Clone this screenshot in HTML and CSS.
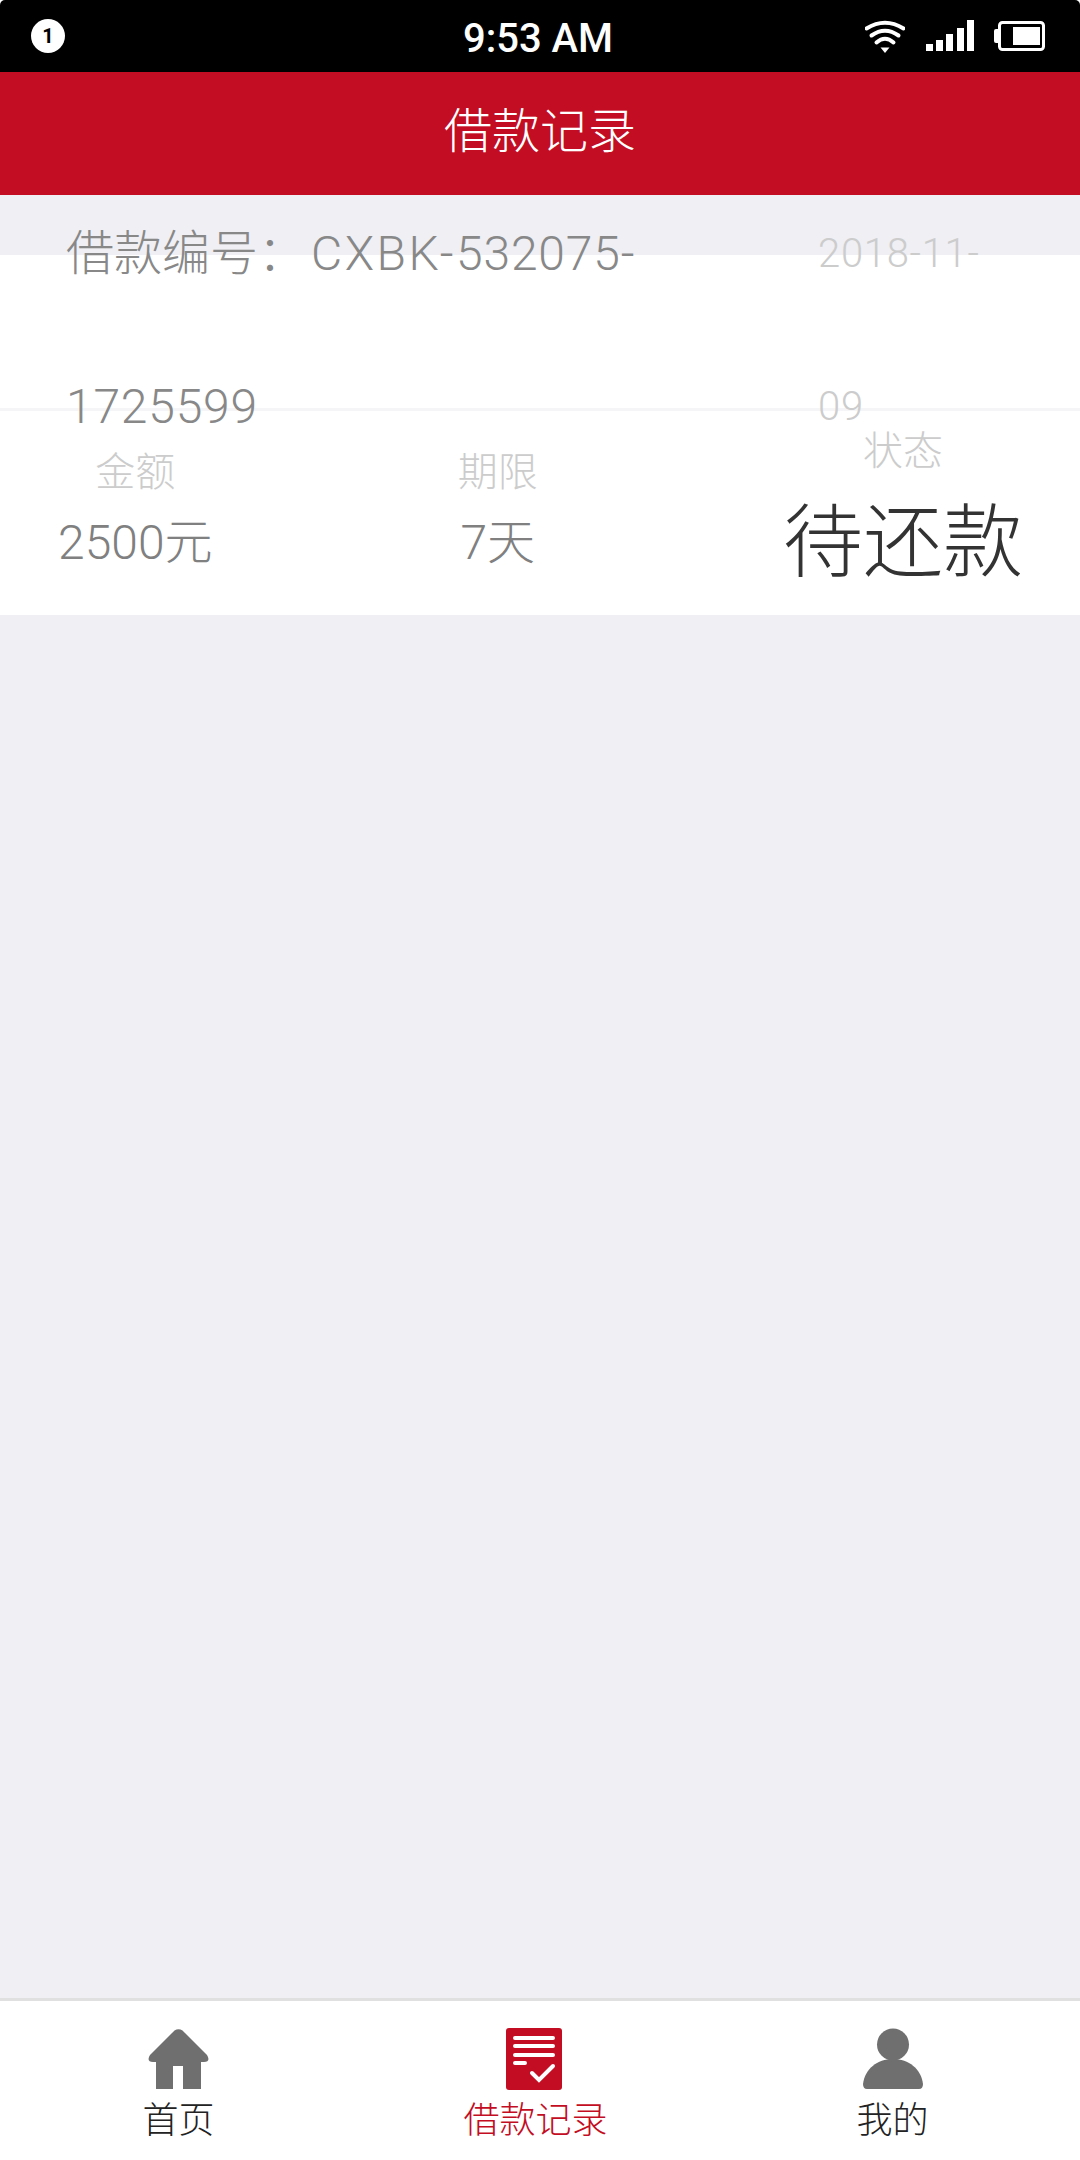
FILE: index.html
```html
<!DOCTYPE html>
<html lang="zh-CN">
<head>
  <meta charset="UTF-8">
  <meta name="viewport" content="width=device-width, initial-scale=1.0">
  <title>借款记录</title>
  <link rel="stylesheet" href="styles.css">
</head>
<body>
  <div class="app">
    <div class="status-bar">
      <div class="status-left"><span class="badge">1</span></div>
      <div class="status-time">9:53 AM</div>
      <div class="status-right">
        <svg class="icon-wifi" width="40" height="33" viewBox="0 0 40 33">
          <path d="M1.5 8.5Q20 -3 38.5 8.5" fill="none" stroke="#fff" stroke-width="4" stroke-linecap="round"/>
          <path d="M6.5 15.5Q20 6 33.5 15.5" fill="none" stroke="#fff" stroke-width="4" stroke-linecap="round"/>
          <path d="M11.5 22.5Q20 15 28.5 22.5" fill="none" stroke="#fff" stroke-width="4" stroke-linecap="round"/>
          <path d="M15.5 27.5H24.5L20 33Z" fill="#fff"/>
        </svg>
        <svg class="icon-signal" width="48" height="31" viewBox="0 0 48 31">
          <rect x="0" y="24" width="7" height="7" fill="#fff"/>
          <rect x="10" y="20" width="7" height="11" fill="#fff"/>
          <rect x="20" y="14" width="7" height="17" fill="#fff"/>
          <rect x="31" y="8" width="7" height="23" fill="#fff"/>
          <rect x="41" y="0" width="7" height="31" fill="#fff"/>
        </svg>
        <svg class="icon-battery" width="51" height="30" viewBox="0 0 51 30">
          <path d="M4 8H2Q0 8 0 10V20Q0 22 2 22H4Z" fill="#fff"/>
          <rect x="5.5" y="1.5" width="44" height="27" rx="3" fill="none" stroke="#fff" stroke-width="3"/>
          <rect x="19" y="6" width="27" height="18" fill="#fff"/>
        </svg>
      </div>
    </div>

    <div class="title-bar">借款记录</div>

    <div class="content">
      <div class="loan-card">
        <div class="loan-head">
          <div class="loan-no">借款编号：<span class="loan-code"><span class="code-prefix">CXBK-</span>532075-<br>1725599</span></div>
          <div class="loan-date">2018-11-<br>09</div>
        </div>
        <div class="loan-body">
          <div class="loan-col">
            <div class="col-label">金额</div>
            <div class="col-value">2500元</div>
          </div>
          <div class="loan-col">
            <div class="col-label">期限</div>
            <div class="col-value">7天</div>
          </div>
          <div class="loan-col">
            <div class="col-label">状态</div>
            <div class="col-value col-status">待还款</div>
          </div>
        </div>
      </div>
    </div>

    <div class="tab-bar">
      <div class="tab">
        <svg class="tab-icon" width="61" height="60" viewBox="0 0 61 60">
          <path d="M26.5 1.5Q30.5 -1 34.5 1.5L59 26Q63 32.500 56 33H53V60H35V37H25V60H8V33H5Q-2 32.500 2 26Z" fill="#6f6f6f"/>
        </svg>
        <div class="tab-label">首页</div>
      </div>
      <div class="tab tab-active">
        <svg class="tab-icon tab-icon-record" width="56" height="62" viewBox="0 0 56 62">
          <rect width="56" height="62" rx="3" fill="#c30d23"/>
          <path d="M9 10H47M9 18H47M9 27H47M9 35H19" stroke="#fff" stroke-width="4" stroke-linecap="round"/>
          <path d="M26 45L33 52L47 38" fill="none" stroke="#fff" stroke-width="4" stroke-linecap="round"/>
        </svg>
        <div class="tab-label">借款记录</div>
      </div>
      <div class="tab">
        <svg class="tab-icon" width="60" height="60" viewBox="0 0 60 60">
          <circle cx="30" cy="15.500" r="16" fill="#6f6f6f"/>
          <path d="M0 55C2 40 14 30 30 30C46 30 58 40 60 55Q60 60 56 60H4Q0 60 0 55Z" fill="#6f6f6f"/>
        </svg>
        <div class="tab-label">我的</div>
      </div>
    </div>
  </div>
</body>
</html>
```

FILE: styles.css
```css
/* CSS Styles */
body {
  margin: 0;
  padding: 0;
  font-family: Roboto, "Noto Sans CJK SC", sans-serif;
  font-weight: 300;
  background-color: #fff;
}

.app {
  display: flex;
  flex-direction: column;
  height: 2160px;
}

.status-bar {
  display: grid;
  grid-template-columns: 1fr auto 1fr;
  align-items: center;
  height: 72px;
  padding: 0 35px 0 31px;
  border-radius: 5px 5px 0 0;
  background-color: #000;
  color: #fff;
}

.badge {
  display: flex;
  align-items: center;
  justify-content: center;
  width: 34px;
  height: 34px;
  border-radius: 50%;
  background-color: #fff;
  color: #000;
  font-size: 20px;
  font-weight: 700;
}

.status-time {
  margin-top: 4px;
  font-size: 40px;
  font-weight: 500;
}

.status-right {
  display: flex;
  align-items: center;
  justify-content: flex-end;
}

.icon-wifi {
  margin-right: 21px;
}

.icon-signal {
  margin-top: -2px;
  margin-right: 20px;
}

.title-bar {
  height: 123px;
  line-height: 120px;
  text-align: center;
  font-size: 48px;
  color: #fff;
  background-color: #c30d23;
}

.content {
  flex: 1;
  padding-top: 60px;
  background-color: #efeff4;
}

.loan-card {
  background-color: #fff;
}

.loan-head {
  display: flex;
  align-items: center;
  justify-content: space-between;
  height: 153px;
  padding: 0 66px;
  border-bottom: 3px solid #f5f5f8;
  line-height: 153px;
}

.loan-no {
  margin-top: -3px;
  font-size: 48px;
  color: #888;
}

.loan-code {
  margin-left: 5px;
  letter-spacing: 0.8px;
}

.code-prefix {
  letter-spacing: 2.5px;
}

.loan-date {
  width: 196px;
  margin-top: -3px;
  font-size: 40px;
  letter-spacing: 0.7px;
  color: #ccc;
}

.loan-body {
  display: flex;
  align-items: center;
  justify-content: space-between;
  height: 204px;
  padding: 0 57px 0 58px;
}

.loan-col {
  text-align: center;
}

.col-label {
  font-size: 40px;
  line-height: 60px;
  color: #ccc;
}

.col-value {
  font-size: 48px;
  line-height: 80px;
  color: #808080;
}

.col-status {
  font-size: 80px;
  line-height: 122px;
  color: #333;
}

.tab-bar {
  display: grid;
  grid-template-columns: repeat(3, 357px);
  height: 159px;
  border-top: 3px solid #e0e0e0;
  background-color: #fff;
}

.tab {
  display: flex;
  flex-direction: column;
  align-items: center;
  padding-top: 27px;
}

.tab-icon {
  display: block;
  height: 62px;
}

.tab-icon-record {
  margin-left: -3px;
}

.tab-label {
  margin-top: 10px;
  font-size: 36px;
  line-height: 42px;
  color: #222;
}

.tab-active .tab-label {
  color: #c30d23;
}
```
